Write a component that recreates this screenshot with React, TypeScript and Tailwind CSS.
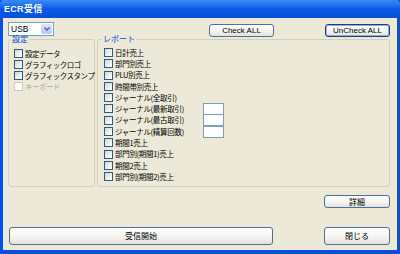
import React from 'react';

const jp = { fontFamily: '"Noto Sans CJK JP", "Noto Sans", sans-serif' };
const en = { fontFamily: '"Liberation Sans", Arial, sans-serif' };

const settings = [
  { label: '設定データ', disabled: false },
  { label: 'グラフィックロゴ', disabled: false },
  { label: 'グラフィックスタンプ', disabled: false },
  { label: 'キーボード', disabled: true },
];

const reports = [
  '日計売上',
  '部門別売上',
  'PLU別売上',
  '時間帯別売上',
  'ジャーナル(全取引)',
  'ジャーナル(最新取引)',
  'ジャーナル(最古取引)',
  'ジャーナル(精算回数)',
  '期間1売上',
  '部門別(期間1)売上',
  '期間2売上',
  '部門別(期間2)売上',
];

function Box({ disabled }: { disabled?: boolean }) {
  return (
    <span
      className={
        disabled
          ? 'w-[9px] h-[9px] shrink-0 border border-[#CAC8BB] bg-white'
          : 'w-[9px] h-[9px] shrink-0 border border-[#2A5A8A] bg-gradient-to-br from-[#D6D6D0] to-white'
      }
    />
  );
}

function XpButton({ children, className = '', primary }: { children: React.ReactNode; className?: string; primary?: boolean }) {
  return (
    <button
      className={
        'flex items-center justify-center rounded-[3px] border bg-gradient-to-b from-white via-[#F6F6F3] to-[#E3E1D8] text-[8px] text-black leading-none ' +
        (primary ? 'border-[#1F3F74] shadow-[inset_0_0_0_1px_#8FB0E8] ' : 'border-[#4F6F9C] ') +
        className
      }
    >
      {children}
    </button>
  );
}

export default function App() {
  return (
    <div className="w-[400px] h-[254px] flex flex-col overflow-hidden bg-[#0A4FD8]" style={jp}>
      <div className="h-[18px] shrink-0 flex items-center pl-[4px] bg-gradient-to-b from-[#3A8CF6] via-[#0A5BE8] to-[#0650D9] rounded-t-[4px]">
        <span className="text-[9px] font-bold text-white leading-none tracking-[0.3px]" style={en}>
          ECR<span style={jp}>受信</span>
        </span>
      </div>
      <div className="flex-1 flex flex-col bg-[#ECE9D8] mx-[3px] mb-[4px] pl-[5px] pr-[7px]">
        <div className="mt-[4px] h-[13px] flex items-start">
          <div className="w-[46px] h-[14px] flex border border-[#7F9DB9] bg-white">
            <span className="flex-1 pl-[2px] text-[8.5px] leading-[12px] text-black" style={en}>USB</span>
            <span className="w-[11px] m-px flex items-center justify-center rounded-[2px] bg-gradient-to-b from-[#DCE6FC] to-[#B4C9F6]">
              <svg width="6" height="4" viewBox="0 0 6 4">
                <path d="M0.5 0.5 L3 3 L5.5 0.5" fill="none" stroke="#4D6185" strokeWidth="1.3" />
              </svg>
            </span>
          </div>
          <XpButton className="ml-[155px] mt-[2px] w-[65px] h-[13px]">
            <span style={en}>Check ALL</span>
          </XpButton>
          <XpButton primary className="ml-[51px] mt-[2px] w-[65px] h-[13px]">
            <span style={en}>UnCheck ALL</span>
          </XpButton>
        </div>

        <div className="mt-[-1px] h-[153px] flex">
          <fieldset className="min-w-0 w-[87px] shrink-0 h-full border border-[#D0D0BF] rounded-[3px] pl-[5px] pt-[4px]">
            <legend className="ml-[-3px] px-px text-[8px] leading-[10px] text-[#0046D5]">設定</legend>
            {settings.map((s) => (
              <div key={s.label} className="h-[11px] flex items-center gap-[2px]">
                <Box disabled={s.disabled} />
                <span className={'text-[7.5px] leading-none tracking-[-0.5px] whitespace-nowrap ' + (s.disabled ? 'text-[#ACA899]' : 'text-black')}>
                  {s.label}
                </span>
              </div>
            ))}
          </fieldset>
          <fieldset className="min-w-0 ml-[2px] w-[293px] shrink-0 h-full border border-[#D0D0BF] rounded-[3px] pl-[6px] pt-[3px]">
            <legend className="ml-[-2px] px-px text-[8px] leading-[10px] text-[#0046D5]">レポート</legend>
            {reports.map((r, i) => (
              <div key={r} className="h-[11.27px] flex items-center">
                <Box />
                <span className="ml-[2px] w-[88px] text-[7.5px] leading-none tracking-[-0.3px] text-black whitespace-nowrap">{r}</span>
                {i >= 5 && i <= 7 && <span className="w-[21px] h-[12px] border border-[#7F9DB9] bg-white" />}
              </div>
            ))}
          </fieldset>
        </div>

        <div className="mt-[8px] flex justify-end">
          <XpButton className="w-[66px] h-[13px]">詳細</XpButton>
        </div>

        <div className="mt-[19px] flex items-start">
          <XpButton className="ml-[1px] w-[264px] h-[18px]">受信開始</XpButton>
          <XpButton className="ml-auto w-[66px] h-[18px]">閉じる</XpButton>
        </div>
      </div>
    </div>
  );
}
